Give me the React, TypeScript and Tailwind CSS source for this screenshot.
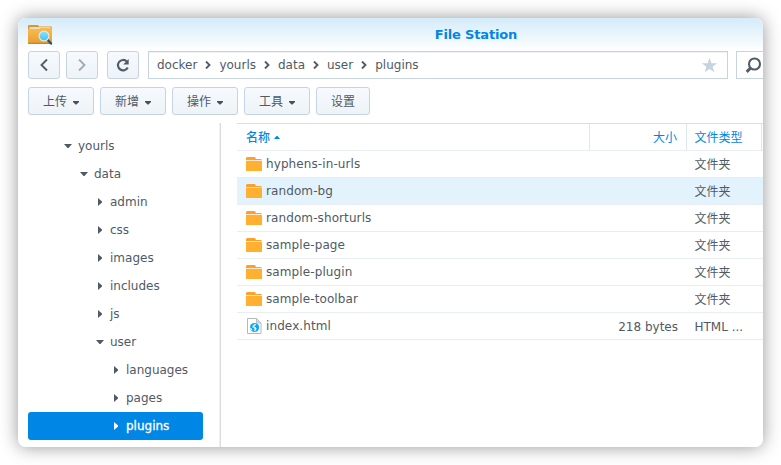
import React from 'react';

const UI_FONT = "font-['DejaVu_Sans','Noto_Sans_CJK_SC',sans-serif]";

const BTN =
  'flex h-7 shrink-0 items-center justify-center rounded-[3px] border border-[#c6d3e0] bg-linear-to-b from-[#f6faff] to-[#eef3f8]';

function Chevron({ right, color }: { right?: boolean; color: string }) {
  return (
    <svg width="10" height="14" viewBox="0 0 10 14" fill="none" stroke={color} strokeWidth="1.900">
      <path d={right ? 'M2 1.500 7.500 7 2 12.500' : 'M8 1.500 2.500 7 8 12.500'} />
    </svg>
  );
}

function AppIcon() {
  return (
    <svg width="25" height="21" viewBox="0 0 25 21">
      <defs>
        <linearGradient id="folder" x1="0" y1="0" x2="0" y2="1">
          <stop offset="0" stopColor="#fcbb4f" />
          <stop offset="1" stopColor="#e59e33" />
        </linearGradient>
        <linearGradient id="lens" x1="0" y1="0" x2="0" y2="1">
          <stop offset="0" stopColor="#8be4ff" />
          <stop offset="1" stopColor="#3cc4fa" />
        </linearGradient>
      </defs>
      <path d="M0 2a1 1 0 0 1 1-1h9l1.200 1.500H23a1 1 0 0 1 1 1V8H0z" fill="#d9972f" />
      <path d="M1.500 3h21v2.500H1.500z" fill="#ecdcc4" />
      <path d="M0 5h11.500l1-1.200H24V19a1 1 0 0 1-1 1H1a1 1 0 0 1-1-1z" fill="url(#folder)" />
      <path d="M0 18.800h24v.2a1 1 0 0 1-1 1H1a1 1 0 0 1-1-1z" fill="#c98325" />
      <path d="m19.500 15.800 3.500 3.800" stroke="#24506f" strokeWidth="2.200" strokeLinecap="round" />
      <circle cx="16" cy="12" r="4.900" fill="url(#lens)" stroke="#e3e6e5" strokeWidth="1.200" />
    </svg>
  );
}

function Folder() {
  return (
    <svg width="16" height="14" viewBox="0 0 16 14" className="block">
      <path d="M1 0h8l1 2h5l1 1H0V1z" fill="#ff9f2e" />
      <path d="M0 3.700h16V14H0z" fill="#ffb030" />
    </svg>
  );
}

function HtmlFile() {
  return (
    <svg width="16" height="16" viewBox="0 0 16 16" className="block">
      <path d="M1.500.5h9l4.500 4.500v10.500H1.500z" fill="#fff" stroke="#aeb9c3" />
      <path d="M10.500.5V5H15z" fill="#d5dce3" stroke="#aeb9c3" strokeWidth=".8" />
      <circle cx="8.500" cy="9.500" r="4.600" fill="#08a9f4" />
      <path d="M8.400 6.200 6.800 7.600l-.4 1.700L8 9.800l.6 1.300-.5 2.300 1.500-1 1-1.600-1-1.600-1.500-.6.6-1.200 1.500-.5-.6-.9z" fill="#fff" />
      <path d="m4 9.200 1.800 1.500.5 2.300-1.500-1z" fill="#fff" />
    </svg>
  );
}

function TreeArrow({ open }: { open?: boolean }) {
  return (
    <svg width="8" height="8" viewBox="0 0 8 8" fill="currentColor" className="shrink-0">
      <path d={open ? 'M0 2h8L4.500 6h-1z' : 'M2 0 6 3.500v1L2 8z'} />
    </svg>
  );
}

const tree = [
  { name: 'yourls', pad: 'pl-9', open: true },
  { name: 'data', pad: 'pl-[52px]', open: true },
  { name: 'admin', pad: 'pl-[68px]' },
  { name: 'css', pad: 'pl-[68px]' },
  { name: 'images', pad: 'pl-[68px]' },
  { name: 'includes', pad: 'pl-[68px]' },
  { name: 'js', pad: 'pl-[68px]' },
  { name: 'user', pad: 'pl-[68px]', open: true },
  { name: 'languages', pad: 'pl-[84px]' },
  { name: 'pages', pad: 'pl-[84px]' },
  { name: 'plugins', pad: 'pl-[84px]', selected: true },
];

const files = [
  { name: 'hyphens-in-urls', size: '', type: '文件夹' },
  { name: 'random-bg', size: '', type: '文件夹', hover: true },
  { name: 'random-shorturls', size: '', type: '文件夹' },
  { name: 'sample-page', size: '', type: '文件夹' },
  { name: 'sample-plugin', size: '', type: '文件夹' },
  { name: 'sample-toolbar', size: '', type: '文件夹' },
  { name: 'index.html', size: '218 bytes', type: 'HTML ...', html: true },
];

const crumbs = ['docker', 'yourls', 'data', 'user', 'plugins'];
const menus = ['上传', '新增', '操作', '工具'];

function TitleBar() {
  return (
    <header className="flex h-[33px] shrink-0 bg-linear-to-b from-[#d4ebf9] to-white pl-2.5">
      <div className="w-[25px] pt-1.5">
        <AppIcon />
      </div>
      <h1 className="flex-1 pl-[136px] text-center text-[13px] font-bold leading-[33px] tracking-[-0.16px] text-[#0086e5]">File Station</h1>
    </header>
  );
}

function NavBar() {
  return (
    <div className="flex h-7 shrink-0 pl-2.5">
      <button className={`${BTN} w-8`}>
        <Chevron color="#505d69" />
      </button>
      <button className={`${BTN} ml-1.5 w-8`}>
        <Chevron right color="#a2acb8" />
      </button>
      <button className={`${BTN} ml-[9px] w-8`}>
        <svg width="14" height="14" viewBox="0 0 14 14">
          <path d="M11.800 9.500A5.200 5.200 0 1 1 10.800 3.400" fill="none" stroke="#505d69" strokeWidth="2.100" />
          <path d="M12.700 1v5.500H7.200z" fill="#505d69" />
        </svg>
      </button>
      <div className="ml-[9px] flex w-[580px] shrink-0 items-center border border-[#c6d3e0] bg-white pl-2 pr-[9px] shadow-[inset_0_1px_0_#eef2f7]">
        {crumbs.map((c, i) => (
          <React.Fragment key={c}>
            {i > 0 && (
              <svg width="6" height="8" viewBox="0 0 6 8" fill="none" stroke="#505d69" strokeWidth="1.900" className="mx-2 shrink-0">
                <path d="M1 .5 4.500 4 1 7.500" />
              </svg>
            )}
            <span>{c}</span>
          </React.Fragment>
        ))}
        <svg width="17" height="16" viewBox="0 0 17 16" className="ml-auto">
          <path d="m8.500.8 1.900 5.400h5.800l-4.600 3.500 1.700 5.500-4.800-3.300-4.800 3.300 1.700-5.500L.8 6.200h5.800z" fill="#c6d3e0" />
        </svg>
      </div>
      <div className="ml-2 flex w-[60px] shrink-0 items-center border border-[#c6d3e0] bg-white pl-2">
        <svg width="17" height="17" viewBox="0 0 17 17" fill="none" stroke="#505d69">
          <circle cx="9.500" cy="7" r="5.500" strokeWidth="2.100" />
          <path d="m5.300 11.300-3.600 3.600" strokeWidth="3" />
        </svg>
      </div>
    </div>
  );
}

function Toolbar() {
  return (
    <div className="mt-2 flex h-7 shrink-0 gap-1.5 pl-2.5">
      {menus.map((m) => (
        <button key={m} className={`${BTN} w-[66px] gap-1.5 pt-px`}>
          {m}
          <svg width="6" height="4" viewBox="0 0 6 4" fill="#46525e" className="mt-0.5">
            <path d="M0 0h6v1L3.500 3.500h-1L0 1z" />
          </svg>
        </button>
      ))}
      <button className={`${BTN} w-[54px] pt-px`}>设置</button>
    </div>
  );
}

export default function App() {
  return (
    <div className={`h-[465px] w-[781px] overflow-hidden bg-white p-[18px] text-xs text-[#505a64] ${UI_FONT}`}>
      <div className="flex h-[429px] w-[745px] rounded-lg shadow-[0_0_18px_rgba(0,0,0,0.42)]">
        <div className="flex w-full flex-col overflow-hidden rounded-lg bg-white">
          <TitleBar />
          <NavBar />
          <Toolbar />
          <div className="mt-2 flex min-h-0 flex-1">
            <nav className="w-[203px] shrink-0 border-r border-[#d9dcdf] pl-2.5 pt-[9px] shadow-[inset_-1px_0_0_#f0f1f2]">
              {tree.map((t) => (
                <div
                  key={t.name}
                  className={`flex h-7 w-[175px] items-center gap-1.5 rounded-[3px] ${t.pad} ${t.selected ? 'bg-[#0086e5] text-white' : ''}`}
                >
                  <TreeArrow open={t.open} />
                  <span className={t.selected ? '[-webkit-text-stroke:0.3px_white]' : ''}>{t.name}</span>
                </div>
              ))}
            </nav>
            <main className="ml-4 flex-1">
              <div className="flex h-7 border-y border-t-[#d3dfe9] border-b-[#e8eef3] leading-[28px] text-[#0086e5]">
                <div className="flex w-[353px] items-center gap-1 border-r border-[#dde7f1] pl-[9px] font-medium">
                  <span className="pt-0.5">名称</span>
                  <svg width="6" height="3" viewBox="0 0 6 3" fill="currentColor" className="mt-px">
                    <path d="M0 3h6L3.500 0h-1z" />
                  </svg>
                </div>
                <div className="w-[97px] border-r border-[#dde7f1] pr-[9px] text-right">大小</div>
                <div className="w-[75px] border-r border-[#dde7f1] pl-[7.500px]">文件类型</div>
              </div>
              {files.map((f) => (
                <div key={f.name} className={`flex h-[27px] items-center border-b border-[#e8eef3] ${f.hover ? 'bg-[#e3f3fe]' : ''}`}>
                  <div className="flex w-[353px] items-center gap-1 pl-[9px]">
                    {f.html ? <HtmlFile /> : <Folder />}
                    <span className="tracking-[0.1px]">{f.name}</span>
                  </div>
                  <div className="w-[97px] pr-[9px] pt-0.5 text-right">{f.size}</div>
                  <div className="pl-[7.500px] pt-0.5">{f.type}</div>
                </div>
              ))}
            </main>
          </div>
        </div>
      </div>
    </div>
  );
}
